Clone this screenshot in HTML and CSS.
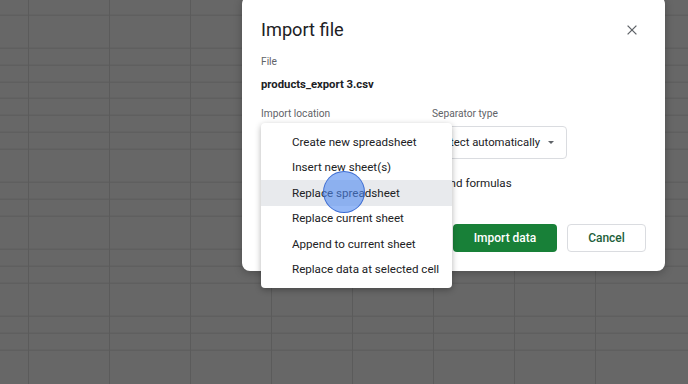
FILE: index.html
```html
<!DOCTYPE html>
<html lang="en">
<head>
<meta charset="utf-8">
<title>Import file</title>
<link rel="stylesheet" href="styles.css">
</head>
<body>
  <div class="sheet-bg"></div>

  <div class="dialog">
    <div class="dialog-header">
      <h1 class="dialog-title">Import file</h1>
      <span class="close-btn" aria-label="Close">
        <svg width="10" height="10" viewBox="0 0 10 10"><path d="M0.6 0.6 L9.4 9.4 M9.4 0.6 L0.6 9.4" stroke="#5f6368" stroke-width="1.3" fill="none"/></svg>
      </span>
    </div>

    <div class="field-label">File</div>
    <div class="file-name">products_export 3.csv</div>

    <div class="field-row">
      <div class="field">
        <div class="field-label">Import location</div>
        <div class="select">
          <span class="select-text">Replace spreadsheet</span>
          <span class="caret"></span>
        </div>
      </div>
      <div class="field">
        <div class="field-label">Separator type</div>
        <div class="select">
          <span class="select-text">Detect automatically</span>
          <span class="caret"></span>
        </div>
      </div>
    </div>

    <div class="check-row">
      <span class="checkbox"></span>
      <span class="check-text">Convert text to numbers, dates, and formulas</span>
    </div>

    <div class="actions">
      <span class="btn btn-primary">Import data</span>
      <span class="btn btn-secondary">Cancel</span>
    </div>
  </div>

  <div class="menu">
    <div class="menu-item">Create new spreadsheet</div>
    <div class="menu-item">Insert new sheet(s)</div>
    <div class="menu-item is-hover">Replace spreadsheet</div>
    <div class="menu-item">Replace current sheet</div>
    <div class="menu-item">Append to current sheet</div>
    <div class="menu-item">Replace data at selected cell</div>
  </div>

  <div class="cursor-dot"></div>
</body>
</html>
```

FILE: styles.css
```css
html, body {
  margin: 0;
  padding: 0;
}

body {
  width: 688px;
  height: 384px;
  overflow: hidden;
  position: relative;
  font-family: Roboto, "Liberation Sans", Arial, sans-serif;
  color: #202124;
  background-color: #676767;
}

.sheet-bg {
  width: 688px;
  height: 384px;
  background-color: #676767;
  background-image:
    repeating-linear-gradient(to right, transparent 0, transparent 80px, #5b5b5b 80px, #5b5b5b 81px),
    repeating-linear-gradient(to bottom, transparent 0, transparent 15.75px, #5b5b5b 15.75px, #5b5b5b 16.75px);
  background-position: -52px 0, 0 -1.3px;
}

.dialog {
  position: absolute;
  left: 242px;
  top: -4px;
  width: 423px;
  height: 275px;
  box-sizing: border-box;
  padding: 22px 19px 0 19px;
  background: #ffffff;
  border-radius: 8px;
  box-shadow: 0 2px 8px rgba(0, 0, 0, 0.25);
}

.dialog-header {
  display: flex;
  align-items: center;
  justify-content: space-between;
  height: 24px;
}

.dialog-title {
  margin: 0;
  font-size: 18.2px;
  line-height: 24px;
  font-weight: 400;
  color: #202124;
}

.close-btn {
  display: flex;
  width: 10px;
  height: 10px;
  margin-right: 9px;
}

.field-label {
  margin-top: 12px;
  font-size: 10.2px;
  line-height: 16px;
  color: #5f6368;
}

.file-name {
  margin-top: 6px;
  font-size: 11.3px;
  line-height: 18px;
  font-weight: 700;
  color: #202124;
}

.field-row {
  display: grid;
  grid-template-columns: 159px 135px;
  column-gap: 12px;
}

.select {
  margin-top: 4px;
  height: 33px;
  box-sizing: border-box;
  border: 1px solid #dadce0;
  border-radius: 4px;
  display: flex;
  align-items: center;
  justify-content: flex-end;
  padding: 0 12px 0 0;
  overflow: hidden;
  font-size: 11.3px;
  color: #202124;
}

.select-text {
  white-space: nowrap;
}

.caret {
  flex: none;
  margin-left: 8px;
  width: 0;
  height: 0;
  border-left: 3.5px solid transparent;
  border-right: 3.5px solid transparent;
  border-top: 3.5px solid #5f6368;
}

.check-row {
  margin-top: 15px;
  height: 18px;
  display: flex;
  align-items: center;
  gap: 5px;
  font-size: 11.6px;
  color: #202124;
}

.checkbox {
  width: 8px;
  height: 8px;
  border: 2px solid #5f6368;
  border-radius: 2px;
  margin-left: 2px;
}

.actions {
  margin-top: 32px;
  display: flex;
  justify-content: flex-end;
  gap: 10px;
}

.btn {
  height: 28px;
  box-sizing: border-box;
  border-radius: 4px;
  display: flex;
  align-items: center;
  justify-content: center;
  font-size: 12px;
  font-weight: 500;
}

.btn-primary {
  width: 104px;
  background: #188038;
  color: #ffffff;
}

.btn-secondary {
  width: 79px;
  background: #ffffff;
  border: 1px solid #dadce0;
  color: #1e5f3b;
}

.menu {
  position: absolute;
  left: 261px;
  top: 123px;
  width: 191px;
  box-sizing: border-box;
  padding: 6px 0;
  background: #ffffff;
  border-radius: 4px;
  box-shadow: 0 2px 6px rgba(0, 0, 0, 0.3);
}

.menu-item {
  height: 25.5px;
  display: flex;
  align-items: center;
  padding-left: 31px;
  font-size: 11.6px;
  color: #202124;
  white-space: nowrap;
}

.menu-item.is-hover {
  background: #e8eaed;
}

.cursor-dot {
  position: absolute;
  left: 323px;
  top: 171px;
  width: 42px;
  height: 42px;
  box-sizing: border-box;
  border-radius: 50%;
  background: rgba(78, 136, 240, 0.6);
  border: 1.5px solid rgba(45, 95, 205, 0.85);
}
```
